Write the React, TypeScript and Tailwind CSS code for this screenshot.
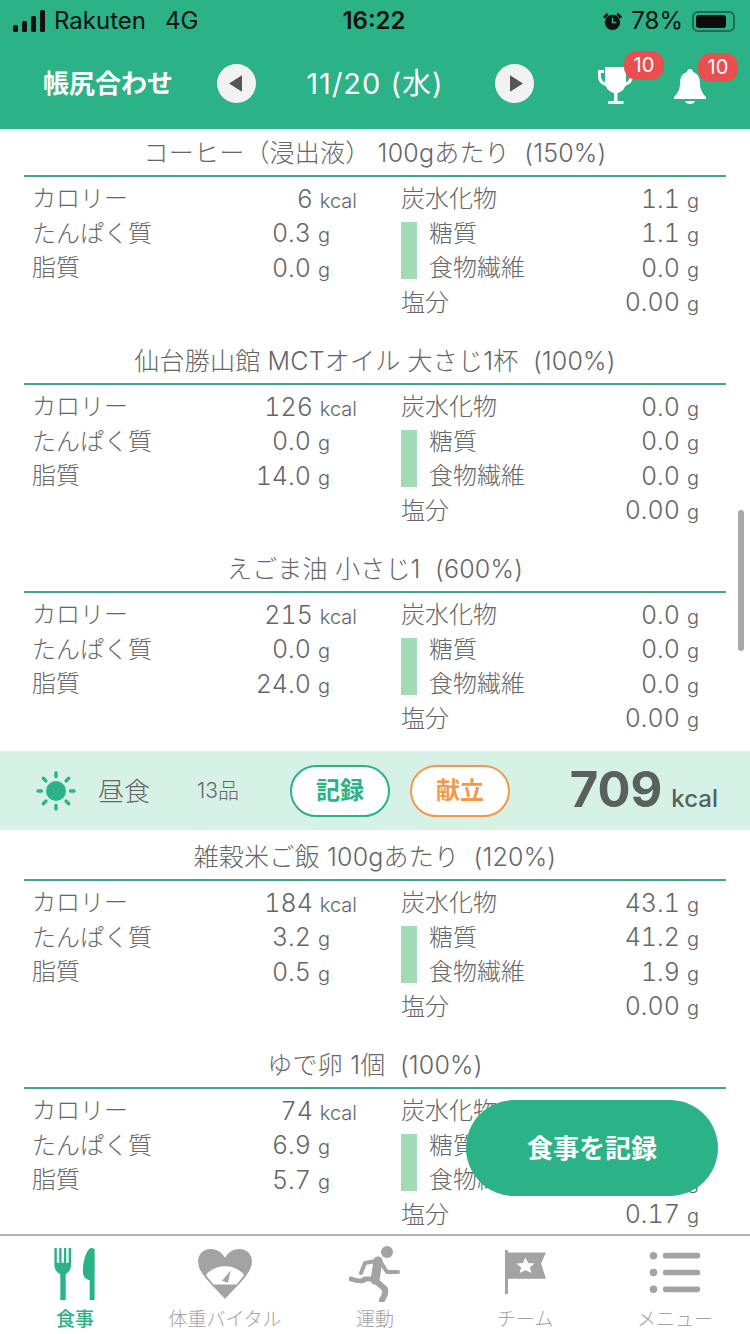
const jp = "font-['Inter','Noto_Sans_CJK_JP',sans-serif]"

type Food = {
  title: string
  kcal: string
  protein: string
  fat: string
  carb: string
  sugar: string
  fiber: string
  salt: string
}

const breakfast: Food[] = [
  { title: 'コーヒー（浸出液） 100gあたり  (150%)', kcal: '6', protein: '0.3', fat: '0.0', carb: '1.1', sugar: '1.1', fiber: '0.0', salt: '0.00' },
  { title: '仙台勝山館 MCTオイル 大さじ1杯  (100%)', kcal: '126', protein: '0.0', fat: '14.0', carb: '0.0', sugar: '0.0', fiber: '0.0', salt: '0.00' },
  { title: 'えごま油 小さじ1  (600%)', kcal: '215', protein: '0.0', fat: '24.0', carb: '0.0', sugar: '0.0', fiber: '0.0', salt: '0.00' },
]

const lunch: Food[] = [
  { title: '雑穀米ご飯 100gあたり  (120%)', kcal: '184', protein: '3.2', fat: '0.5', carb: '43.1', sugar: '41.2', fiber: '1.9', salt: '0.00' },
  { title: 'ゆで卵 1個  (100%)', kcal: '74', protein: '6.9', fat: '5.7', carb: '0.3', sugar: '0.3', fiber: '0.0', salt: '0.17' },
]

function Row({ label, value, unit, className }: { label: string; value: string; unit: string; className?: string }) {
  return (
    <div className={`flex h-[34.5px] items-center justify-between text-[24px] font-light leading-none ${className ?? ''}`}>
      <span>{label}</span>
      <span className="flex items-baseline gap-[7px]">
        <span className="text-[25px] font-light tabular-nums">{value}</span>
        <span className="text-[20px] font-light">{unit}</span>
      </span>
    </div>
  )
}

function FoodCard({ food }: { food: Food }) {
  return (
    <section className="h-[208px]">
      <h3 className="flex h-[46px] items-center justify-center whitespace-pre pt-[3px] text-[25px] font-light tracking-[0.2px] text-[#666]">{food.title}</h3>
      <div className="mx-6 border-t-2 border-[#3fa58e]" />
      <div className="flex pt-[5px]">
        <div className="ml-[32px] w-[325px]">
          <Row label="カロリー" value={food.kcal} unit="kcal" />
          <Row label="たんぱく質" value={food.protein} unit="g" className="pr-[27px]" />
          <Row label="脂質" value={food.fat} unit="g" className="pr-[27px]" />
        </div>
        <div className="ml-[44px] w-[298px]">
          <Row label="炭水化物" value={food.carb} unit="g" />
          <div className="flex">
            <div className="mb-[7px] mt-[5px] w-4 bg-[#a1dcb7]" />
            <div className="ml-[12px] flex-1">
              <Row label="糖質" value={food.sugar} unit="g" />
              <Row label="食物繊維" value={food.fiber} unit="g" />
            </div>
          </div>
          <Row label="塩分" value={food.salt} unit="g" />
        </div>
      </div>
    </section>
  )
}

function MealBar() {
  return (
    <div className="mb-[3px] mt-[-2px] flex h-[79px] items-center border-t border-[#e4efe9] bg-[#d6f2e7] pl-9 pr-8">
      <svg viewBox="0 0 40 40" className="h-[40px] w-[40px] text-[#2bb286]" fill="currentColor">
        <circle cx="20" cy="20" r="10" />
        <g stroke="currentColor" strokeWidth="3.4" strokeLinecap="round">
          <path d="M20 2v3.500M20 34.500V38M2 20h3.500M34.500 20H38M7.300 7.300l2.600 2.600M30.100 30.100l2.600 2.600M32.700 7.300l-2.600 2.600M9.900 30.100l-2.600 2.600" />
        </g>
      </svg>
      <span className="ml-[22px] text-[26px] font-light text-[#666]">昼食</span>
      <span className="ml-[47px] w-[45px] whitespace-nowrap text-[21px] font-light text-[#666]">13品</span>
      <button className="ml-[48px] flex h-[52px] w-[100px] items-center justify-center rounded-[26px] border-2 border-[#2bb286] bg-white text-[24px] font-bold text-[#2bb286]">記録</button>
      <button className="ml-[20px] flex h-[52px] w-[100px] items-center justify-center rounded-[26px] border-2 border-[#f2994a] bg-white text-[24px] font-bold text-[#f2994a]">献立</button>
      <span className="ml-auto flex items-baseline gap-[9px] text-[#59605d]">
        <span className="text-[49px] font-bold leading-none">709</span>
        <span className="text-[24px] font-medium">kcal</span>
      </span>
    </div>
  )
}

function Badge({ className }: { className: string }) {
  return (
    <span className={`absolute top-[-16px] flex h-[29px] w-[40px] items-center justify-center rounded-[13px] bg-[#ea4f4f] text-[20px] text-white ${className}`}>10</span>
  )
}

function TabItem({ label, active, children }: { label: string; active?: boolean; children: React.ReactNode }) {
  return (
    <div className={`flex w-[150px] flex-col items-center ${active ? 'text-[#2bb286]' : 'text-[#a3a3a3]'}`}>
      <div className="flex h-[60px] items-center">{children}</div>
      <span className={`mt-[4px] text-[19px] leading-6 ${active ? 'font-medium' : 'font-light'}`}>{label}</span>
    </div>
  )
}

export default function App() {
  return (
    <div className={`relative flex h-[1334px] w-[750px] flex-col overflow-hidden bg-white text-[#666] ${jp}`}>
      <header className="h-[129px] shrink-0 bg-[#2bb286]">
        <div className="flex h-10 items-center justify-between pl-[13px] pr-[15px] pt-[2px] text-[24px] text-[#111]">
          <div className="flex w-[250px] items-center">
            <svg viewBox="0 0 34 22" className="mr-[7px] h-[22px] w-[34px]" fill="currentColor">
              <rect x="0" y="15" width="5" height="7" rx="1.5" />
              <rect x="9" y="11" width="5" height="11" rx="1.5" />
              <rect x="18" y="6" width="5" height="16" rx="1.5" />
              <rect x="27" y="0" width="5" height="22" rx="1.5" />
            </svg>
            <span>Rakuten</span>
            <span className="ml-[19px]">4G</span>
          </div>
          <span className="font-semibold">16:22</span>
          <div className="flex w-[250px] items-center justify-end">
            <svg viewBox="0 0 22 22" className="mr-[8px] h-[21px] w-[21px]" fill="currentColor">
              <circle cx="11" cy="12" r="8" />
              <path d="M1 6l4-4 2 2-4 4zM21 6l-4-4-2 2 4 4z" />
              <path d="M11 7v5h4" stroke="#2bb286" strokeWidth="1.6" fill="none" />
            </svg>
            <span>78%</span>
            <div className="ml-[9px] flex h-[21px] w-[43px] items-center rounded-[6px] border-2 border-[#1c6e54] p-[2px]">
              <div className="h-full w-[30px] rounded-[3px] bg-[#0c0c0c]" />
            </div>
          </div>
        </div>
        <div className="relative flex h-[87px] items-center text-white">
          <span className="ml-[43px] w-[174px] text-[26px] font-bold">帳尻合わせ</span>
          <button className="flex h-[39px] w-[39px] items-center justify-center rounded-full bg-[#f2f2f2]">
            <svg viewBox="0 0 14 18" className="mr-[3px] h-[17px] w-[13px] fill-[#555]"><path d="M14 0v18L0 9z" /></svg>
          </button>
          <span className="ml-[49px] w-[140px] whitespace-nowrap text-center text-[29px] tracking-[1px]">11/20 (水)</span>
          <button className="ml-[50px] flex h-[39px] w-[39px] items-center justify-center rounded-full bg-[#f2f2f2]">
            <svg viewBox="0 0 14 18" className="ml-[3px] h-[17px] w-[13px] fill-[#555]"><path d="M0 0v18L14 9z" /></svg>
          </button>
          <div className="relative ml-[63px] mt-[5px] h-[39px] w-[37px]">
            <svg viewBox="0 0 37 39" className="h-[39px] w-[37px]" fill="white">
              <path d="M8 0h21v15c0 6-4 10-8.500 11v8h6v3H11v-3h6v-8C12.500 25 8 21 8 15z" />
              <path d="M7 3H1v6c0 6 4 9 8 10l1-2.500c-3-1-6-3.500-6-7.500V6h3zM30 3h6v6c0 6-4 9-8 10l-1-2.500c3-1 6-3.500 6-7.500V6h-3z" />
            </svg>
            <Badge className="left-[27px]" />
          </div>
          <div className="relative ml-[40px] mt-[5px] h-[35px] w-[32px]">
            <svg viewBox="0 0 32 35" className="h-[35px] w-[32px]" fill="white">
              <path d="M16 0c2 0 3 1.500 3 3 5 1.500 7 6 7 11 0 6 2 10 6 14v2H0v-2c4-4 6-8 6-14 0-5 2-9.500 7-11 0-1.500 1-3 3-3z" />
              <path d="M11 32h10c-.500 2-2.500 3-5 3s-4.500-1-5-3z" />
            </svg>
            <Badge className="left-[24px]" />
          </div>
        </div>
      </header>

      <main className="relative flex-1 overflow-hidden">
        {breakfast.map((f) => <FoodCard key={f.title} food={f} />)}
        <MealBar />
        {lunch.map((f) => <FoodCard key={f.title} food={f} />)}
        <div className="absolute right-[6px] top-[381px] h-[141px] w-[6px] rounded-full bg-[#a8a8a8]" />
        <button className="absolute left-[466px] top-[971px] h-[96px] w-[252px] rounded-[48px] bg-[#2bb286] text-[26px] font-bold text-white">食事を記録</button>
      </main>

      <nav className="z-10 flex h-[100px] shrink-0 border-t-2 border-[#b3b3b3] bg-white pt-[8px]">
        <TabItem label="食事" active>
          <svg viewBox="0 0 42 54" className="h-[53px] w-[42px]" fill="currentColor">
            <path d="M0 0h2.500v15h2.400V0h2.400v15h2.400V0h2.400v15h2.400V0H17v17c0 5-2.600 8-5.500 9.500V53H6V26.500C2.600 25 0 22 0 17z" />
            <path d="M37 0c3 0 4 1 4 1v52h-5V33c-4-1-7-4-7-9C29 12 33 2 37 0z" />
          </svg>
        </TabItem>
        <TabItem label="体重バイタル">
          <svg viewBox="0 0 56 52" className="h-[50px] w-[56px]" fill="currentColor">
            <path d="M28 52C16 38 0 26 0 13 0 5 6 0 13 0c7 0 12 4 15 9 3-5 8-9 15-9 7 0 13 5 13 13 0 13-16 25-28 39z" />
            <path d="M8 27c5-6 12-9 20-9s15 3 20 9l-8 10H16z" fill="white" />
            <path d="M25 33l9-11-3 13z" />
          </svg>
        </TabItem>
        <TabItem label="運動">
          <svg viewBox="0 0 52 56" className="h-[56px] w-[52px]" fill="none" stroke="currentColor" strokeLinecap="round" strokeLinejoin="round">
            <circle cx="38" cy="6" r="6" fill="currentColor" stroke="none" />
            <path d="M29 15l-3 19" strokeWidth="9" />
            <path d="M31 15l7 11h11" strokeWidth="4" />
            <path d="M27 15l-11 2-4 10" strokeWidth="4" />
            <path d="M24 33H16c-2 3-8 2-14 0" strokeWidth="5" />
            <path d="M28 36l8 7c1 4-1 8-3 11" strokeWidth="6" />
          </svg>
        </TabItem>
        <TabItem label="チーム">
          <svg viewBox="0 0 42 52" preserveAspectRatio="none" className="mb-[5px] h-[44px] w-[41px]" fill="currentColor">
            <path d="M0 0h3v3h39l-5 13 5 18H3v18H0z" />
            <path d="M21 9l2.800 6.300 6.700.600-5 4.600 1.500 6.700L21 24l-6 3.200 1.500-6.700-5-4.600 6.700-.600z" fill="white" />
          </svg>
        </TabItem>
        <TabItem label="メニュー">
          <svg viewBox="0 0 54 46" className="mb-[3px] h-[43px] w-[54px]" fill="currentColor">
            <circle cx="4" cy="5" r="4" /><circle cx="4" cy="23" r="4" /><circle cx="4" cy="41" r="4" />
            <rect x="14" y="2" width="40" height="6" rx="3" /><rect x="14" y="20" width="40" height="6" rx="3" /><rect x="14" y="38" width="40" height="6" rx="3" />
          </svg>
        </TabItem>
      </nav>
    </div>
  )
}
